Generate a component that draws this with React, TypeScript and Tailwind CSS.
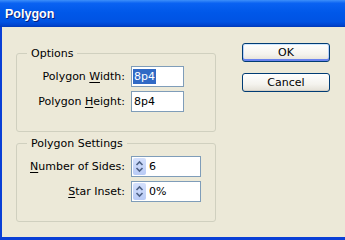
import React from 'react';

const Spinner = () => (
  <div className="ml-[1px] my-[1px] w-[13px] self-stretch rounded-[2px] bg-[linear-gradient(to_bottom,#d4e0fc,#b9cbf6)] flex items-center justify-center">
    <svg width="9" height="17" viewBox="0 0 9 17">
      <path d="M1.5 7 L4.5 4 L7.5 7" fill="none" stroke="#4d6185" strokeWidth="1.6" />
      <path d="M1.5 10 L4.5 13 L7.5 10" fill="none" stroke="#4d6185" strokeWidth="1.6" />
    </svg>
  </div>
);

const Mn = ({ children }: { children: React.ReactNode }) => <span className="underline underline-offset-[2px]">{children}</span>;

const Group = ({ title, children, className = '' }: { title: string; children: React.ReactNode; className?: string }) => (
  <fieldset className={`w-[200px] border border-[#d0d0bf] rounded-[3px] pb-[19px] ${className}`}>
    <legend className="ml-[10px] px-[4px] leading-[13px]">{title}</legend>
    <div className="grid grid-cols-[108px_auto] gap-x-[6px] gap-y-[4px] pt-[6px] items-center">{children}</div>
  </fieldset>
);

const XpButton = ({ label, primary }: { label: string; primary?: boolean }) => (
  <button
    className={`w-[88px] h-[19px] border border-[#003c74] rounded-[3px] bg-[linear-gradient(to_bottom,#ffffff,#f4f3ee_60%,#e3e0d6)] flex items-center justify-center ${
      primary
        ? 'shadow-[inset_0_1px_0_#cee7ff,inset_0_-2px_0_#6982ee,inset_1px_0_0_#b8d0f9,inset_-1px_0_0_#b8d0f9]'
        : 'shadow-[inset_0_-1px_0_#d6d0c5]'
    }`}
  >
    {label}
  </button>
);

export default function App() {
  return (
    <div className="w-[345px] h-[240px] flex flex-col overflow-hidden font-['DejaVu_Sans',sans-serif] text-[11px] leading-[13px] text-black">
      {/* Title bar */}
      <div className="h-[27px] flex items-center pl-[5px] pt-[1px] bg-[linear-gradient(to_bottom,#3d8ffa_0%,#0a62f2_12%,#0058e9_45%,#0053e3_80%,#0046d2_92%,#0038b8_100%)]">
        <span className="font-['Liberation_Sans',sans-serif] font-bold text-[12.5px] text-white [text-shadow:1px_1px_0_#0a1f7a]">Polygon</span>
      </div>

      {/* Body */}
      <div className="flex-1 flex bg-[#ece9d8] border-l-2 border-b-[3px] border-[#0a3fd6]">
        <div className="pl-[14px] pt-[20px] flex flex-col">
          <Group title="Options">
            <div className="text-right">
              Polygon <Mn>W</Mn>idth:
            </div>
            <div className="w-[53px] h-[21px] border border-[#7f9db9] bg-white flex items-center px-[1px]">
              <span className="px-[1px] leading-[15px] bg-[#316ac5] text-white">8p4</span>
            </div>
            <div className="text-right">
              Polygon <Mn>H</Mn>eight:
            </div>
            <div className="w-[53px] h-[21px] border border-[#7f9db9] bg-white flex items-center px-[1px]">
              <span className="px-[1px] leading-[15px]">8p4</span>
            </div>
          </Group>

          <Group title="Polygon Settings" className="mt-[5px]">
            <div className="text-right">
              <Mn>N</Mn>umber of Sides:
            </div>
            <div className="w-[70px] h-[21px] border border-[#7f9db9] bg-white flex items-center">
              <Spinner />
              <span className="ml-[3px]">6</span>
            </div>
            <div className="text-right">
              <Mn>S</Mn>tar Inset:
            </div>
            <div className="w-[70px] h-[21px] border border-[#7f9db9] bg-white flex items-center">
              <Spinner />
              <span className="ml-[3px]">0%</span>
            </div>
          </Group>
        </div>

        <div className="ml-[26px] pt-[16px] flex flex-col gap-[11px]">
          <XpButton label="OK" primary />
          <XpButton label="Cancel" />
        </div>
      </div>
    </div>
  );
}
